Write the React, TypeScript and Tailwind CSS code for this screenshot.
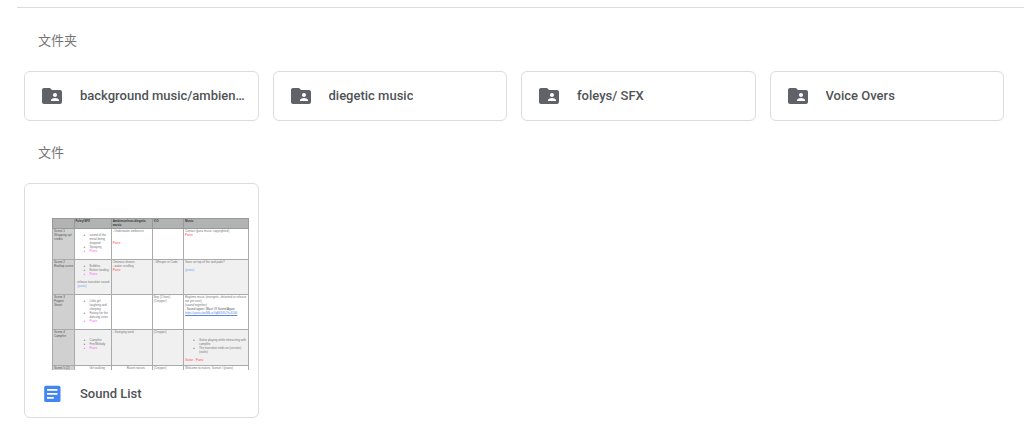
import React from 'react';

type Line = {
  text: string;
  bullet?: boolean;
  indent?: boolean;
  className?: string;
};

const folders = [
  { id: 1, name: 'background music/ambience' },
  { id: 2, name: 'diegetic music' },
  { id: 3, name: 'foleys/ SFX' },
  { id: 4, name: 'Voice Overs' },
];

const blank: Line = { text: '' };
const pink = 'text-[#ff5cff]';
const red = 'text-[#ff5050]';
const blue = 'text-[#7aa7f0]';

const columns = ['', 'Foley/SFX', 'Ambience/non-diegetic music', 'V.O', 'Music'];

const scenes: { id: number; height: string; cells: Line[][] }[] = [
  {
    id: 1,
    height: 'h-[31px]',
    cells: [
      [{ text: 'Scene 1' }, { text: 'Wrapping up/' }, { text: 'credits' }],
      [
        blank,
        { text: 'sound of the', bullet: true },
        { text: 'metal being', indent: true },
        { text: 'dropped', indent: true },
        { text: 'Spraying', bullet: true },
        { text: 'Piano', bullet: true, className: pink },
      ],
      [{ text: '- Underwater ambience' }, blank, blank, { text: 'Piano', className: red }],
      [],
      [{ text: 'Contact (para music copyrighted)' }, { text: 'Piano', className: red }],
    ],
  },
  {
    id: 2,
    height: 'h-[35px]',
    cells: [
      [{ text: 'Scene 2' }, { text: 'Rooftop scene' }],
      [
        blank,
        { text: 'Bubbles', bullet: true },
        { text: 'Button landing', bullet: true },
        { text: 'Piano', bullet: true, className: pink },
        blank,
        { text: '- release transition sound' },
        { text: '  (piano)', className: blue },
      ],
      [{ text: 'Ominous drones' }, { text: '- water scrolling' }, { text: 'Piano', className: red }],
      [{ text: '- Whisper in Code' }, blank],
      [{ text: 'Voice on top of the and pads?' }, blank, { text: '(piano)', className: blue }],
    ],
  },
  {
    id: 3,
    height: 'h-[35px]',
    cells: [
      [{ text: 'Scene 3' }, { text: 'Puppet' }, { text: 'Street' }],
      [
        blank,
        { text: 'Little girl', bullet: true },
        { text: 'laughing and', indent: true },
        { text: 'sleeping', indent: true },
        { text: 'Footsy for the', bullet: true },
        { text: 'dancing sister', indent: true },
        { text: 'Piano', bullet: true, className: pink },
      ],
      [],
      [{ text: 'Boy (2 lines)' }, { text: '(Crepper)' }],
      [
        { text: 'Ragtime music (energetic, distorted or release' },
        { text: 'not yet sure)' },
        { text: '(sound together)' },
        { text: '- Sound again / Blast Of Sound Again', className: 'text-[#555]' },
        { text: 'https://youtu.be/Mk-wYqB4S3U?t=3166', className: 'text-[#5b86dd] underline' },
      ],
    ],
  },
  {
    id: 4,
    height: 'h-[36px]',
    cells: [
      [{ text: 'Scene 4' }, { text: 'Campfire' }],
      [
        blank,
        blank,
        { text: 'Campfire', bullet: true },
        { text: 'Fire/Melody', bullet: true },
        { text: 'Piano', bullet: true, className: pink },
      ],
      [{ text: '- Swinging wind' }],
      [{ text: '(Crepper)' }],
      [
        blank,
        blank,
        { text: 'Guitar playing while interacting with', bullet: true },
        { text: 'campfire', indent: true },
        { text: 'The transition ends on (version)', bullet: true },
        { text: '(violin)', indent: true },
        blank,
        { text: 'Guitar - Piano', className: red },
      ],
    ],
  },
  {
    id: 5,
    height: 'h-[5px]',
    cells: [
      [{ text: 'Scene 5 (2)' }],
      [{ text: 'Girl walking', indent: true }],
      [{ text: 'Raven noises', indent: true }],
      [{ text: '(Crepper)' }],
      [{ text: 'Welcome to nature, Sunset / (piano)' }],
    ],
  },
];

const FolderSharedIcon: React.FC = () => (
  <svg viewBox="0 0 24 24" className="h-6 w-6 shrink-0 fill-[#5f6368]" aria-hidden="true">
    <path d="M20 6h-8l-2-2H4c-1.1 0-1.99.9-1.99 2L2 18c0 1.1.9 2 2 2h16c1.1 0 2-.9 2-2V8c0-1.1-.9-2-2-2zm-5 3c1.1 0 2 .9 2 2s-.9 2-2 2-2-.9-2-2 .9-2 2-2zm4 8h-8v-1c0-1.33 2.67-2 4-2s4 .67 4 2v1z" />
  </svg>
);

const DocsIcon: React.FC = () => (
  <svg viewBox="0 0 24 24" className="h-6 w-6 shrink-0" aria-hidden="true">
    <rect x="4.2" y="3.8" width="16.3" height="16.3" rx="1.7" fill="#4285f4" />
    <path d="M7 7h10.5v1.8H7zM7 11h10.5v1.8H7zM7 15h6.8v1.8H7z" fill="#fff" />
  </svg>
);

const CellLine: React.FC<{ line: Line }> = ({ line }) => (
  <div className={`flex h-1 whitespace-pre ${line.className ?? ''}`}>
    {line.bullet && <span className="w-[14px] shrink-0 pl-2">●</span>}
    {line.indent && <span className="w-[14px] shrink-0" />}
    <span>{line.text}</span>
  </div>
);

const DocumentPreview: React.FC = () => (
  <div className="h-[152px] overflow-hidden">
    <table className="w-full table-fixed border-collapse font-['Liberation_Sans',sans-serif] text-[3px] leading-[4px] text-[#777]">
      <colgroup>
        <col className="w-[11%]" />
        <col className="w-[19%]" />
        <col className="w-[21%]" />
        <col className="w-[16%]" />
        <col className="w-[33%]" />
      </colgroup>
      <thead>
        <tr className="h-[10px] bg-[#b0b3b2] text-left align-top text-[#333]">
          {columns.map((column) => (
            <th key={column} className="border border-[#999] px-px py-0 font-bold">
              {column}
            </th>
          ))}
        </tr>
      </thead>
      <tbody>
        {scenes.map((scene) => (
          <tr key={scene.id} className={`align-top even:bg-[#f0f0f0] ${scene.height}`}>
            {scene.cells.map((lines, i) => (
              <td
                key={i}
                className="border border-[#aaa] px-px py-0 first:bg-[#d0d0d0] first:text-[#555]"
              >
                {lines.map((line, j) => (
                  <CellLine key={j} line={line} />
                ))}
              </td>
            ))}
          </tr>
        ))}
      </tbody>
    </table>
  </div>
);

const App: React.FC = () => {
  return (
    <main className="bg-white pt-[7px] pb-4 font-['Roboto','Noto_Sans_CJK_SC',sans-serif] text-[13px] leading-5 text-[#505356]">
      <hr className="ml-[17px] border-[#dadce0]" />
      <div className="pr-5 pl-6">
        <section className="pt-[23px]">
          <h2 className="pl-[14px] text-[#757575]">文件夹</h2>
          <div className="mt-5 grid grid-cols-4 gap-[14px]">
            {folders.map((folder) => (
              <button
                key={folder.id}
                type="button"
                className="flex h-[50px] min-w-0 items-center gap-4 rounded-md border border-[#dadce0] pr-[11px] pl-[15px] text-left"
              >
                <FolderSharedIcon />
                <span className="truncate font-medium">{folder.name}</span>
              </button>
            ))}
          </div>
        </section>
        <section className="pt-[22px]">
          <h2 className="pl-[14px] text-[#757575]">文件</h2>
          <div className="mt-5 grid grid-cols-4 gap-[14px]">
            <article className="rounded-md border border-[#dadce0]">
              <div className="pt-[34px] pr-[9px] pl-[27px]">
                <DocumentPreview />
              </div>
              <div className="flex h-[47px] items-center gap-4 px-[15px]">
                <DocsIcon />
                <span className="truncate font-medium">Sound List</span>
              </div>
            </article>
          </div>
        </section>
      </div>
    </main>
  );
};

export default App;
